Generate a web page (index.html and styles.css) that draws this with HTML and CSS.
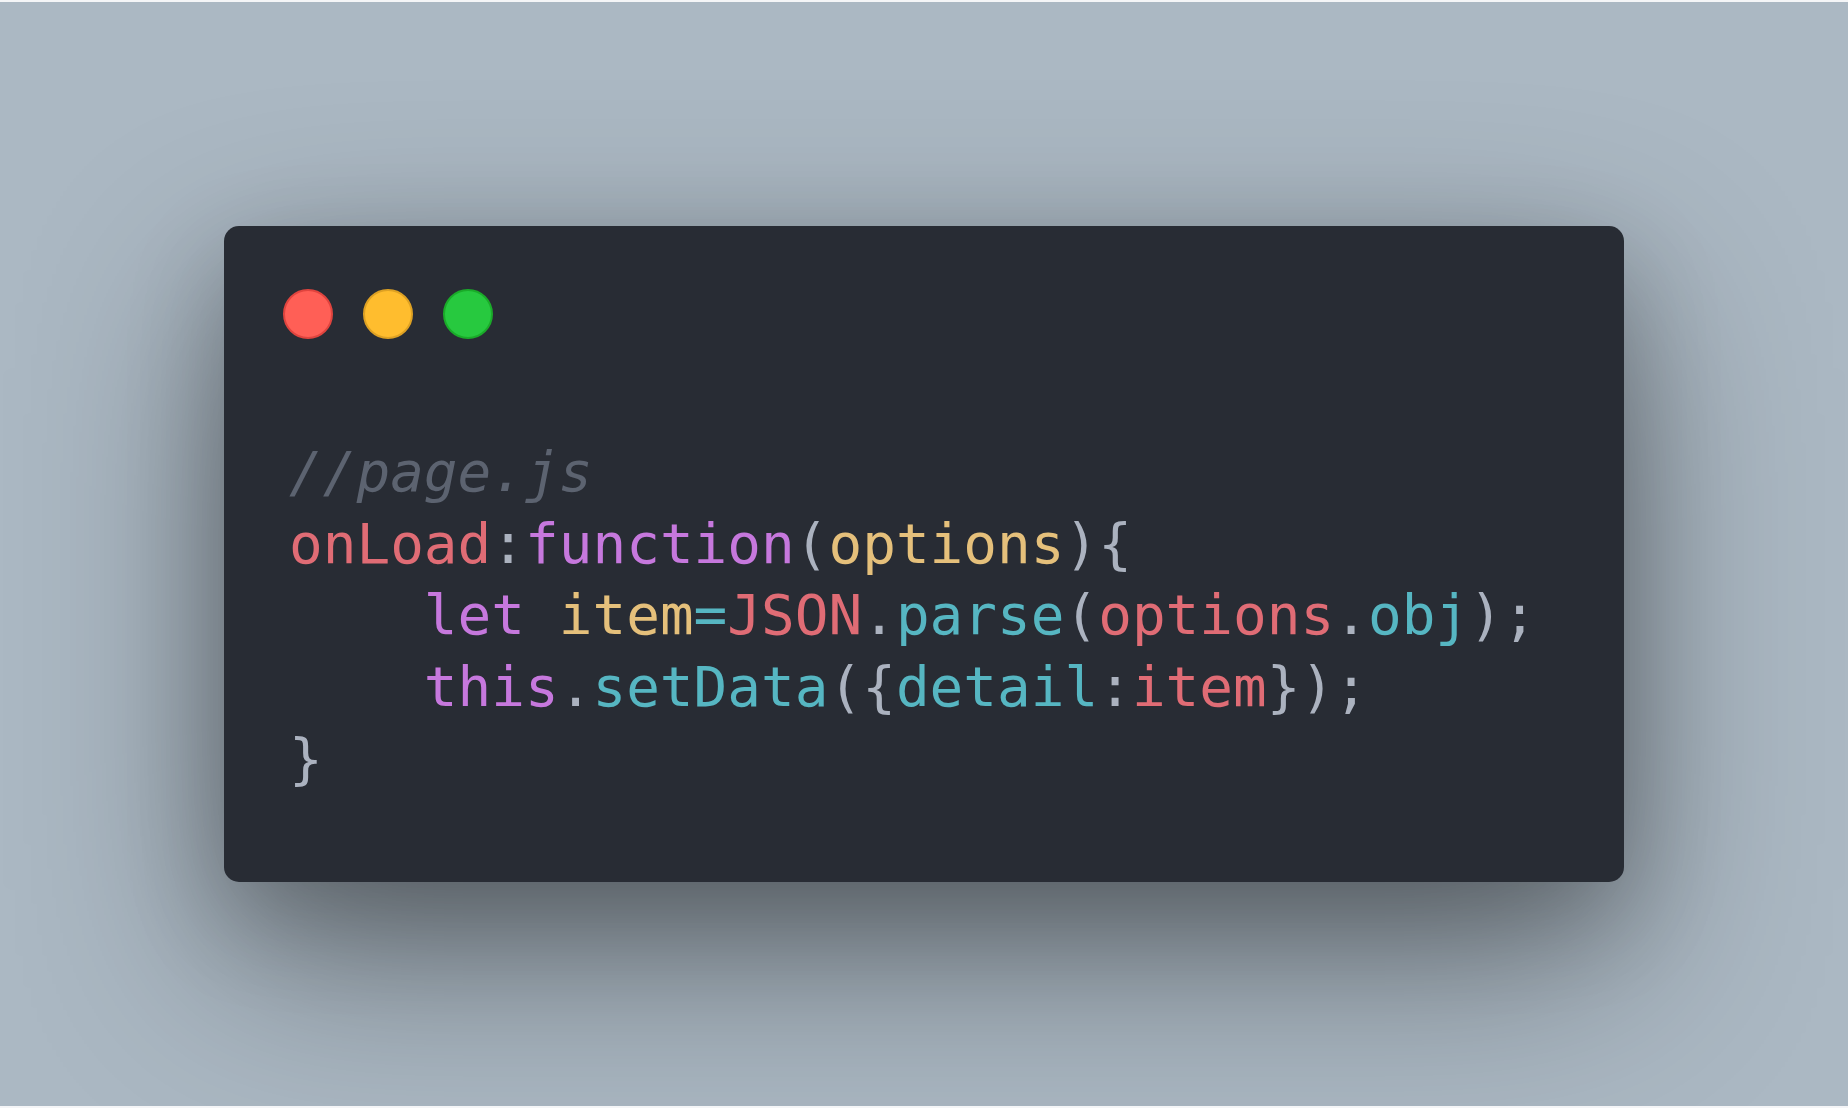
FILE: index.html
```html
<!DOCTYPE html>
<html lang="en">
<head>
<meta charset="utf-8">
<title>page.js</title>
<link rel="stylesheet" href="styles.css">
</head>
<body>
<main class="stage">
  <section class="window">
    <div class="controls">
      <span class="dot dot-red"></span>
      <span class="dot dot-yellow"></span>
      <span class="dot dot-green"></span>
    </div>
    <pre class="code"><span class="c-comment">//page.js</span>
<span class="c-red">onLoad</span><span class="c-plain">:</span><span class="c-purple">function</span><span class="c-plain">(</span><span class="c-yellow">options</span><span class="c-plain">){</span>
    <span class="c-purple">let</span> <span class="c-yellow">item</span><span class="c-cyan">=</span><span class="c-red">JSON</span><span class="c-plain">.</span><span class="c-cyan">parse</span><span class="c-plain">(</span><span class="c-red">options</span><span class="c-plain">.</span><span class="c-cyan">obj</span><span class="c-plain">);</span>
    <span class="c-purple">this</span><span class="c-plain">.</span><span class="c-cyan">setData</span><span class="c-plain">({</span><span class="c-cyan">detail</span><span class="c-plain">:</span><span class="c-red">item</span><span class="c-plain">});</span>
<span class="c-plain">}</span></pre>
  </section>
</main>
</body>
</html>
```
FILE: styles.css
```css
html, body {
  margin: 0;
  padding: 0;
  background: #f4f5f7;
}

.stage {
  margin-top: 2px;
  height: 1104px;
  background: #abb8c3;
  display: flex;
  align-items: center;
  justify-content: center;
  overflow: hidden;
}

.window {
  box-sizing: border-box;
  width: 1400px;
  height: 656px;
  background: #282c34;
  border-radius: 15px;
  box-shadow:
    0 75px 200px rgba(0, 0, 0, 0.42),
    0 35px 100px rgba(0, 0, 0, 0.2);
  padding: 63px 0 0 0;
}

.controls {
  display: flex;
  gap: 30px;
  padding-left: 59px;
}

.dot {
  box-sizing: border-box;
  width: 50px;
  height: 50px;
  border-radius: 50%;
  border: 2px solid transparent;
}

.dot-red { background: #ff5f56; border-color: #e0443e; }
.dot-yellow { background: #ffbd2e; border-color: #dea123; }
.dot-green { background: #27c93f; border-color: #1aab29; }

.code {
  margin: 97px 0 0 0;
  padding-left: 65px;
  font-family: "DejaVu Sans Mono", "Liberation Mono", monospace;
  font-size: 56px;
  line-height: 71.7px;
  color: #abb2bf;
  white-space: pre;
}

.c-comment { color: #5c6370; font-style: italic; }
.c-red { color: #e06c75; }
.c-purple { color: #c678dd; }
.c-yellow { color: #e5c07b; }
.c-cyan { color: #56b6c2; }
.c-plain { color: #abb2bf; }
```
